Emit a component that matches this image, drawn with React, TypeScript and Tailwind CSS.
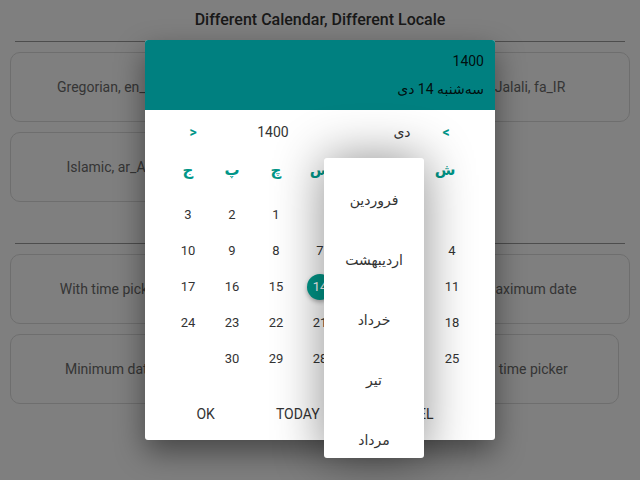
import React from "react";

const FONT = "font-['Roboto','DejaVu_Sans',sans-serif]";

const weekDays = ["ش", "ی", "د", "س", "چ", "پ", "ج"];
const months = ["فروردین", "اردیبهشت", "خرداد", "تیر", "مرداد"];

const days: (number | null)[] = [
  null, null, null, null, 1, 2, 3,
  4, 5, 6, 7, 8, 9, 10,
  11, 12, 13, 14, 15, 16, 17,
  18, 19, 20, 21, 22, 23, 24,
  25, 26, 27, 28, 29, 30, null,
];

const Card: React.FC<{ label: string; className?: string }> = ({ label, className = "" }) => (
  <div
    className={`h-[70px] rounded-[10px] border border-[#dcdcdc] flex items-center justify-center text-[14px] text-[#6b6b6b] ${className}`}
  >
    {label}
  </div>
);

const App: React.FC = () => {
  return (
    <div className={`relative w-[640px] h-[480px] overflow-hidden bg-white ${FONT}`}>
      {/* page behind the dialog */}
      <div className="pt-[10px]">
        <h1 className="text-center text-[16px] leading-[20px] font-medium text-[#333]">
          Different Calendar, Different Locale
        </h1>
        <div className="mx-[15px] mt-[11px] border-t border-[#9a9a9a]" />
        <div className="px-[10px] pt-[10px] flex flex-col gap-[10px]">
          <div className="grid grid-cols-3 gap-[10px]">
            <Card label="Gregorian, en_US" />
            <Card label="Persian, fa_IR" />
            <Card label="Jalali, fa_IR" />
          </div>
          <div className="grid grid-cols-3 gap-[10px]">
            <Card label="Islamic, ar_AE" />
          </div>
        </div>
        <div className="mx-[15px] mt-[41px] border-t border-[#9a9a9a]" />
        <div className="px-[10px] pt-[10px] flex flex-col gap-[10px]">
          <div className="grid grid-cols-3 gap-[10px]">
            <Card label="With time picker" />
            <Card label="Only month picker" />
            <Card label="Maximum date" />
          </div>
          <div className="grid grid-cols-[200px_145px_244px] gap-[10px]">
            <Card label="Minimum date" />
            <Card label="Disabled days" />
            <Card label="Range with time picker" />
          </div>
        </div>
      </div>

      {/* overlay */}
      <div className="absolute inset-0 bg-black/50 flex items-center justify-center">
        <div className="relative w-[350px] h-[400px] bg-white rounded-[3px] shadow-[0_12px_30px_rgba(0,0,0,0.45)]">
          <div dir="rtl" className="h-[70px] bg-[#008080] rounded-t-[3px] pr-[11px] text-[14px] text-black/90">
            <div className="pt-[11px] leading-[20px]">1400</div>
            <div className="pt-[8px] leading-[20px]">سه‌شنبه 14 دی</div>
          </div>

          <div className="px-[21px]">
            <div dir="rtl" className="grid grid-cols-7 h-[44px] items-center text-center">
              <span className="text-[#009688] font-bold text-[14px] pr-[12px]">&gt;</span>
              <span className="text-[14px] text-[#333] pr-[12px]">دی</span>
              <span />
              <span />
              <span className="text-[14px] text-[#333] pr-[6px]">1400</span>
              <span />
              <span className="text-[#009688] font-bold text-[14px] pl-[10px]">&lt;</span>
            </div>
            <div dir="rtl" className="grid grid-cols-7 h-[32px] items-center text-center">
              {weekDays.map((d, i) => (
                <span
                  key={d}
                  className={`text-[#009688] font-bold text-[15px] ${i === 0 ? "pr-[14px]" : ""}`}
                >
                  {d}
                </span>
              ))}
            </div>
            <div dir="rtl" className="grid grid-cols-7 mt-[11px]">
              {days.map((d, i) => (
                <div key={i} className="h-[36px] flex items-center justify-center">
                  {d === 14 ? (
                    <span className="w-[26px] h-[26px] rounded-full bg-[#009688] text-white text-[13px] flex items-center justify-center shadow-[0_2px_4px_rgba(0,0,0,0.3)]">
                      14
                    </span>
                  ) : (
                    <span className="text-[13px] text-[#333]">{d ?? ""}</span>
                  )}
                </div>
              ))}
            </div>
          </div>

          <div className="mt-[19px] h-[36px] flex items-center justify-center gap-[61px] pr-[10px] text-[14px] text-[#333]">
            <span>OK</span>
            <span>TODAY</span>
            <span>CANCEL</span>
          </div>

          {/* month dropdown */}
          <div className="absolute left-[179px] top-[118px] w-[100px] h-[300px] bg-white rounded-[3px] overflow-hidden pt-[12px] shadow-[0_0_50px_rgba(0,0,0,0.45)]">
            {months.map((m) => (
              <div key={m} className="h-[60px] flex items-center justify-center text-[14px] text-[#333]">
                {m}
              </div>
            ))}
          </div>
        </div>
      </div>
    </div>
  );
};

export default App;
